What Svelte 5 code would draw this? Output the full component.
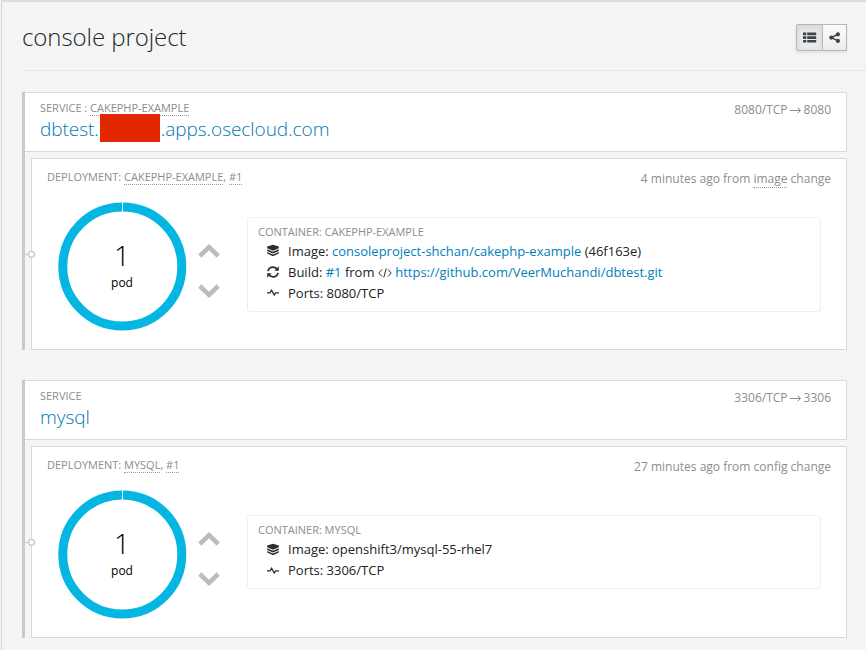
<script>
  const services = [
    {
      label: 'SERVICE : ',
      alias: 'CAKEPHP-EXAMPLE',
      host: ['dbtest.', '.apps.osecloud.com'],
      ports: ['8080/TCP', '8080'],
      deployment: 'CAKEPHP-EXAMPLE',
      age: '4 minutes ago from ',
      cause: 'image',
      container: 'CAKEPHP-EXAMPLE',
      image: 'consoleproject-shchan/cakephp-example',
      hash: '(46f163e)',
      repo: 'https://github.com/VeerMuchandi/dbtest.git',
      port: '8080/TCP'
    },
    {
      label: 'SERVICE',
      host: ['mysql'],
      ports: ['3306/TCP', '3306'],
      deployment: 'MYSQL',
      age: '27 minutes ago from config',
      container: 'MYSQL',
      image: 'openshift3/mysql-55-rhel7',
      port: '3306/TCP'
    }
  ];
</script>

<main>
  <header class="top">
    <h1>console project</h1>
    <div class="toggle">
      <button class="active" aria-label="List view">
        <svg width="14" height="12" viewBox="0 0 14 12" fill="#3f444a"><path d="M0 .5h3.300v2.700H0zM4.200 .5H13.200v2.700H4.200zM0 4.200h3.300v2.700H0zM4.200 4.200H13.200v2.700H4.200zM0 7.900h3.300v2.700H0zM4.200 7.900H13.200v2.700H4.200z" /></svg>
      </button>
      <button aria-label="Topology view">
        <svg width="12" height="12" viewBox="0 0 12 12" fill="#3f444a"><path d="M9 2.300 2.300 5.600 9 8.900" fill="none" stroke="#3f444a" stroke-width="1.500" /><circle cx="8.900" cy="2.300" r="2.100" /><circle cx="2.300" cy="5.600" r="2.100" /><circle cx="8.900" cy="8.900" r="2.100" /></svg>
      </button>
    </div>
  </header>

  {#each services as s}
    <section class="service">
      <div class="card head">
        <div>
          <div class="caps">{s.label}{#if s.alias}<span class="dotted">{s.alias}</span>{/if}</div>
          <h2><span>{s.host[0]}</span>{#if s.host[1]}<i class="redacted"></i><span>{s.host[1]}</span>{/if}</h2>
        </div>
        <div class="meta">{s.ports[0]}<svg class="arrow" width="11" height="8" viewBox="0 0 11 8" fill="none" stroke="#8b8d8f"><path d="M0 4.500h10.500M7.700 1.700l2.800 2.800-2.800 2.800" /></svg>{s.ports[1]}</div>
      </div>

      <div class="card deployment">
        <svg class="connector" width="10" height="9" viewBox="0 0 10 9"><path d="M0 4.500h3" stroke="#ccc" /><circle cx="6.500" cy="4.300" r="3" fill="#fff" stroke="#c2c2c2" stroke-width="1.200" /></svg>
        <div class="dephead">
          <div class="caps">DEPLOYMENT: <span class="dotted">{s.deployment}</span>, <span class="dotted">#1</span></div>
          <div class="meta">{s.age}{#if s.cause}<span class="dotted cause">{s.cause}</span>{/if} change</div>
        </div>
        <div class="body">
          <div class="donut">
            <svg width="130" height="130" viewBox="0 0 130 130"><circle cx="65.300" cy="64.500" r="59.500" fill="none" stroke="#05b6e2" stroke-width="9" /><path d="M65.500 0v10" stroke="#fff" /></svg>
            <div class="count"><b>1</b><span>pod</span></div>
          </div>
          <div class="scale">
            <svg width="22" height="14" viewBox="0 0 22 14" fill="none" stroke="#bbb" stroke-width="4.500"><path d="M1.800 12 11 3.200 20.200 12" /></svg>
            <svg width="22" height="14" viewBox="0 0 22 14" fill="none" stroke="#bbb" stroke-width="4.500"><path d="M1.800 2 11 10.800 20.200 2" /></svg>
          </div>
          <div class="container">
            <div class="caps">CONTAINER: {s.container}</div>
            <div class="row">
              <svg width="14" height="14" viewBox="0 0 14 14" fill="#292e34"><path d="M7 .8 12.800 2.600v1.700L7 6.800 1.200 4.300V2.600z" /><path d="M1.200 5.200 7 7.700l5.800-2.500v1.900L7 9.600 1.200 7.100zM1.200 8 7 10.500 12.800 8v1.600L7 12.200 1.200 9.600z" /></svg>
              <span>Image: {#if s.hash}<a href="#image">{s.image}</a> {s.hash}{:else}{s.image}{/if}</span>
            </div>
            {#if s.repo}
              <div class="row">
                <svg width="14" height="14" viewBox="0 0 14 14" fill="none" stroke="#292e34" stroke-width="1.800"><path d="M2 6.200C2.500 3.600 4.500 2.200 7 2.200c1.700 0 3 .7 4 2M12 7.800c-.5 2.600-2.500 4-5 4-1.700 0-3-.7-4-2" /><path d="M12.800 1.200v4.500H8.300zM1.200 12.800V8.300h4.500z" fill="#292e34" stroke="none" /></svg>
                <span>Build: <a href="#build">#1</a> from <svg class="code" width="14" height="12" viewBox="0 0 14 12" fill="none" stroke="#292e34"><path d="M4 2.500.8 6 4 9.500M10 2.500 13.200 6 10 9.500M8.200 1.500 5.800 10.500" /></svg> <a href="#repo">{s.repo}</a></span>
              </div>
            {/if}
            <div class="row">
              <svg width="14" height="14" viewBox="0 0 14 14" fill="none" stroke="#292e34" stroke-width="1.300"><path d="M1 6.800h3l1.600-2.600 2.600 4.800 1.400-2.200H13" /></svg>
              <span>Ports: {s.port}</span>
            </div>
          </div>
        </div>
      </div>
    </section>
  {/each}
</main>

<style>
  :global(body) { background: #f5f5f5; }
  * { box-sizing: border-box; }
  main {
    height: 650px;
    margin-left: 1px;
    padding-left: 20px;
    border-left: 1px solid #d7d7d7;
    border-top: 2px solid #ddd;
    overflow: hidden;
    font: 13px/21px "Open Sans", sans-serif;
    color: #222;
  }
  .top {
    display: flex;
    justify-content: space-between;
    height: 69px;
    padding: 22px 19px 0 0;
    border-bottom: 1px solid #e5e5e5;
    margin-bottom: 21px;
  }
  h1 { margin: 0; font-size: 24px; line-height: 26px; font-weight: 300; color: #22272d; letter-spacing: -.07px; }
  .toggle { display: flex; width: 51px; height: 27px; box-shadow: 0 2px 3px rgba(0,0,0,.08); }
  button {
    display: flex; align-items: center; justify-content: center;
    width: 24px; height: 27px; padding: 0;
    border: 1px solid #b7b7b7; border-left: 0;
    border-radius: 0 1px 1px 0;
    background: linear-gradient(#fafafa, #ededed);
  }
  button.active {
    width: 27px; border-left: 1px solid #b7b7b7; border-radius: 1px 0 0 1px;
    background: #eaeaea; box-shadow: inset 0 2px 6px rgba(0,0,0,.1);
  }
  .service { width: 825px; border-left: 3px solid #c9c9c9; margin-bottom: 30px; }
  .card { background: #fff; border: 1px solid #d9d9d9; }
  .head {
    display: flex; justify-content: space-between;
    height: 60px; padding: 6px 15px 0; border-left: 0;
    margin-bottom: 6px;
  }
  .caps { font-size: 11px; line-height: 18px; color: #8b8d8f; white-space: pre; letter-spacing: -.015px; }
  .dotted { display: inline-block; line-height: 15px; border-bottom: 1px dotted #999; }
  h2 { display: flex; align-items: center; margin: 0; font-size: 19px; line-height: 24px; font-weight: 300; color: #0078b6; letter-spacing: -.05px; }
  .redacted { width: 60px; height: 28px; margin: -3px 1px -1px; background: #e22600; }
  .meta { font-size: 12px; line-height: 20px; color: #8b8d8f; white-space: pre; }
  .head .meta { padding-top: 1px; }
  .arrow { margin: 0 3px 0 2px; }
  .deployment { position: relative; height: 192px; margin-left: 6px; padding: 9px 15px 0; }
  .connector { position: absolute; left: -7px; top: 91px; }
  .dephead { display: flex; justify-content: space-between; height: 34px; }
  .dephead .meta { padding-top: 1px; }
  .cause { line-height: 16px; }
  .body { display: flex; align-items: center; height: 124px; }
  .donut { align-self: flex-start; display: grid; width: 130px; height: 130px; margin-left: 10px; }
  .donut > * { grid-area: 1 / 1; }
  .count { display: flex; flex-direction: column; align-items: center; padding-top: 36px; color: #000; font-size: 12px; }
  .count b { font-size: 28px; font-weight: 300; line-height: 35px; margin-bottom: -1px; }
  .scale { align-self: flex-start; display: flex; flex-direction: column; gap: 26px; width: 22px; margin: 42px 27px 0 11px; }
  .scale svg, .row > svg { display: block; }
  .container {
    width: 574px; padding: 5px 10px 7px;
    border: 1px dotted #ddd; border-top: 1px solid #efefef; border-radius: 4px;
  }
  .row { display: flex; align-items: center; gap: 8px; height: 21px; padding-left: 8px; white-space: nowrap; }
  a { color: #0080bb; text-decoration: none; }
  .code { vertical-align: -2px; }
</style>
